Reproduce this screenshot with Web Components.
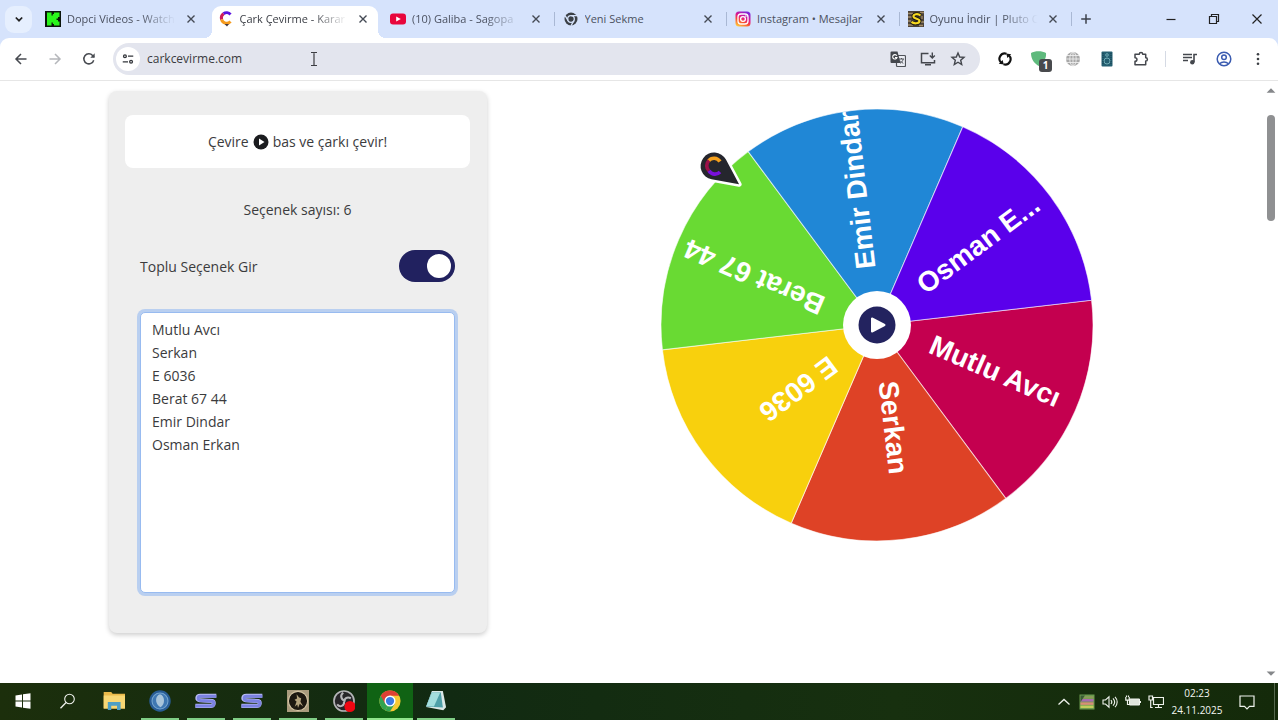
<!DOCTYPE html>
<html lang="tr">
<head>
<meta charset="utf-8">
<title>Çark Çevirme - Karar Çarkı</title>
<style>
  html, body { height: 100%; }
  body {
    margin: 0;
    display: flex;
    flex-direction: column;
    overflow: hidden;
    background: #fff;
    color: #333;
    font-family: "Open Sans", "Noto Sans", sans-serif;
  }
</style>
</head>
<body>
<tab-strip>
  <browser-tab closable fade label="Dopci Videos - Watch"><ui-icon slot="icon" name="kick"></ui-icon></browser-tab>
  <browser-tab active fade label="Çark Çevirme - Karar"><ui-icon slot="icon" name="cark"></ui-icon></browser-tab>
  <browser-tab divider fade label="(10) Galiba - Sagopa"><ui-icon slot="icon" name="youtube"></ui-icon></browser-tab>
  <browser-tab divider label="Yeni Sekme"><ui-icon slot="icon" name="chromeMono"></ui-icon></browser-tab>
  <browser-tab divider label="Instagram • Mesajlar"><ui-icon slot="icon" name="instagram"></ui-icon></browser-tab>
  <browser-tab divider fade label="Oyunu İndir | Pluto O"><ui-icon slot="icon" name="pluto"></ui-icon></browser-tab>
</tab-strip>
<nav-bar></nav-bar>
<page-view>
  <option-panel></option-panel>
  <spin-wheel></spin-wheel>
</page-view>
<task-bar></task-bar>

<script>
const ICONS = {
  kick: '<rect width="16" height="16" fill="#0b140b"/><path d="M2 1.500h4.500v3h1.300V3H9V1.500h5.500v4.500H13v1.500h-1.500v1.500H13V10.500h1.500v4H9V13H7.800v-1.500H6.500v3H2z" fill="#2af51c"/>',
  cark: '<g fill="none" stroke-width="3"><path d="M12.500 3.500A5.200 5.200 0 0 0 5.500 2.800" stroke="#5b12e0"/><path d="M5.500 2.800A5.200 5.200 0 0 0 3.600 8.500" stroke="#d01c58"/><path d="M3.600 8.500A5.200 5.200 0 0 0 12.500 10.500" stroke="#f59a1c"/></g><path d="M6.500 13h4.500l-2 2.500z" fill="#443a40"/>',
  youtube: '<rect y="2.500" width="16" height="11" rx="3" fill="#e8063c"/><path d="M6.200 5.500 10.800 8l-4.600 2.500z" fill="#fff"/>',
  chromeMono: '<circle cx="8" cy="8" r="6.500" fill="#3b4046"/><circle cx="8" cy="8" r="3.300" fill="none" stroke="#d6e3fb" stroke-width="1.300"/><path d="M8 4.700h6M5.100 9.600 2.100 4.600M10.900 9.600 8 14.700" stroke="#d6e3fb" stroke-width="1.300"/>',
  instagram: '<defs><linearGradient id="ig" x1="0.200" y1="1" x2="0.700" y2="0"><stop offset="0" stop-color="#ffc93c"/><stop offset=".35" stop-color="#f9502f"/><stop offset=".6" stop-color="#e0178c"/><stop offset="1" stop-color="#7c28dd"/></linearGradient></defs><rect x=".5" y=".5" width="15" height="15" rx="3.500" fill="url(#ig)"/><g fill="none" stroke="#fff" stroke-width="1.300"><rect x="3" y="3" width="10" height="10" rx="3"/><circle cx="8" cy="8" r="2.400"/></g><circle cx="10.900" cy="5.100" r=".8" fill="#fff"/>',
  pluto: '<rect width="16" height="16" fill="#4a4238"/><path d="M0 2.500h5M0 6h4M0 10h3M0 14h5M12 1.500h4M14 5v3M13 11h3M11 14.500h4" stroke="#a08a68" stroke-width="1.300"/><path d="M12.500 4.500C10 2.200 5 3 5.500 5.800c.4 2.400 6.300 1.600 6 4.300-.3 2.600-5.600 2.900-8 .8" fill="none" stroke="#1d1a12" stroke-width="4"/><path d="M12.500 4.500C10 2.200 5 3 5.500 5.800c.4 2.400 6.300 1.600 6 4.300-.3 2.600-5.600 2.900-8 .8" fill="none" stroke="#f6d820" stroke-width="2.200"/>',
  chevronDown: '<path d="m4.800 6.500 3.200 3.200 3.200-3.200" fill="none" stroke="#222" stroke-width="1.700"/>',
  close: '<path d="m4.500 4.500 7 7m0-7-7 7" stroke="#444a55" stroke-width="1.400"/>',
  plus: '<path d="M8 3.200v9.600M3.200 8h9.600" stroke="#3c414b" stroke-width="1.500"/>',
  minimize: '<path d="M3.500 8.500h9" stroke="#222" stroke-width="1.200"/>',
  restore: '<path d="M3.500 5.500h7v7h-7zM5.500 5.500v-2h7v7h-2" fill="none" stroke="#222" stroke-width="1.200"/>',
  closeWindow: '<path d="m3.500 3.500 9 9m0-9-9 9" stroke="#222" stroke-width="1.200"/>',
  back: '<path d="M13.500 8H3M8 3 3 8l5 5" fill="none" stroke="#474a50" stroke-width="1.500"/>',
  forward: '<path d="M2.500 8H13M8 3l5 5-5 5" fill="none" stroke="#b5b7bb" stroke-width="1.500"/>',
  reload: '<path d="M12.700 9.200A5 5 0 1 1 11.600 4.500L13 6" fill="none" stroke="#474a50" stroke-width="1.500"/><path d="M13.700 2.300v4.400H9.300z" fill="#474a50"/>',
  tune: '<g fill="none" stroke="#33363b" stroke-width="1.500"><circle cx="4.500" cy="4.800" r="1.600"/><path d="M8 4.800h6M2 11.200h6"/><circle cx="11.500" cy="11.200" r="1.600"/></g>',
  translate: '<rect x="6.500" y="4.500" width="9" height="11" rx="1" fill="#eceef4" stroke="#505359" stroke-width="1.200"/><path d="M9 8h5m-2.500-1v1m1.700 0c-.4 2-1.600 3.400-3.200 4.300m.3-2.500c.8 1.200 1.800 2 3 2.500" fill="none" stroke="#505359"/><path d="M1.500.5h6L10.500 12H1.500a1 1 0 0 1-1-1V1.500a1 1 0 0 1 1-1z" fill="#44474d"/><path d="M6.800 4.700A2.200 2.200 0 1 0 7 6.500H5" fill="none" stroke="#fff" stroke-width="1.100"/>',
  install: '<path d="M8.500 2.500h-7v9.200h13V9M5 13.700h6" fill="none" stroke="#44474d" stroke-width="1.500"/><path d="M12.300 1.500v5M9.800 4.500l2.500 2.500 2.500-2.500" fill="none" stroke="#44474d" stroke-width="1.400"/>',
  star: '<path d="m8 2 1.700 4 4.300.4-3.300 2.800 1 4.300L8 11.200l-3.700 2.300 1-4.300L2 6.400 6.300 6z" fill="none" stroke="#44474d" stroke-width="1.400"/>',
  sync: '<path d="M9.500 2.700A5.400 5.400 0 0 0 4.200 11.800M6.500 13.300A5.400 5.400 0 0 0 11.800 4.200" fill="none" stroke="#111" stroke-width="2.100"/><path d="m1.800 12.800 5 .7-1.200-4.600zM14.200 3.200l-5-.7 1.200 4.600z" fill="#111"/>',
  shield: '<path d="M0 2c4-2.500 11-2.500 15 0 .5 6-2.500 9.500-7.500 13C3 12 0 8 0 2z" fill="#5fba7d"/>',
  globe: '<circle cx="8" cy="8" r="7" fill="#a8a8a8"/><g fill="none" stroke="#ededed" stroke-width=".9"><ellipse cx="8" cy="8" rx="3.200" ry="7"/><path d="M8 1v14M1 8h14M2 4.500h12M2 11.500h12"/></g>',
  speaker: '<rect x="2.500" y=".5" width="11" height="15" rx="1" fill="#245e70"/><g fill="none" stroke="#70aab4" stroke-width="1"><circle cx="8" cy="10" r="3"/><circle cx="8" cy="4" r="1.300"/></g><path d="M4 2v12M12 2v12" stroke="#173f4e" stroke-dasharray="1 1"/>',
  puzzle: '<path d="M2 3.200h4.300a1.700 1.700 0 0 1 3.400 0h3v3.500a1.700 1.700 0 0 1 0 3.400v3.700H2v-3.500c2.600 0 2.600-3.600 0-3.600z" fill="none" stroke="#44474d" stroke-width="1.500" stroke-linejoin="round"/>',
  playlist: '<path d="M1 3.500h9M1 6.500h9M1 9.500h5" stroke="#44474d" stroke-width="1.500"/><path d="M12 11V3.500h3" fill="none" stroke="#44474d" stroke-width="1.600"/><circle cx="10.300" cy="11.200" r="2.200" fill="#44474d"/>',
  profile: '<g fill="none" stroke="#3a5bb0" stroke-width="1.500"><circle cx="8" cy="8" r="6.800"/><circle cx="8" cy="6.300" r="2.300"/><path d="M3.500 12.800c2.500-2.300 6.500-2.300 9 0"/></g>',
  more: '<g fill="#3c3f44"><circle cx="8" cy="3.300" r="1.300"/><circle cx="8" cy="8" r="1.300"/><circle cx="8" cy="12.700" r="1.300"/></g>',
  play: '<circle cx="8" cy="8" r="7.500" fill="#1b1c1f"/><path d="M6 4.500 11.500 8 6 11.500z" fill="#fff"/>',
  up: '<path d="M3 11h10L8 6z" fill="#85878a"/>',
  down: '<path d="M3 5h10l-5 5z" fill="#85878a"/>',
  ibeam: '<path d="M5 1.500h2.500L8 2l.5-.5H11M8 2v12M5 14.500h2.500L8 14l.5.500H11" fill="none" stroke="#3c3d42" stroke-width="1.200"/>',
  windows: '<path d="M.5 2.400 7 1.500v6H.5zM8 1.300 15.500.3v7.200H8zM.5 8.500H7v6l-6.500-.9zM8 8.500h7.500v7.200L8 14.700z" fill="#fff"/>',
  search: '<circle cx="9.500" cy="6" r="4.800" fill="none" stroke="#f0f3ee" stroke-width="1.100"/><path d="M6.100 9.500.5 15.200" stroke="#f0f3ee" stroke-width="1.300"/>',
  folder: '<path d="M.5 1.500H6l1 1.300h9V13.500H.5z" fill="#e9b94a"/><path d="M.5 4H16v9.500H.5z" fill="#f7d774"/><path d="M3.500 14.500V8.800h9.300v5.700h-2.600v-3H6v3z" fill="#4d9fc4"/>',
  orb: '<circle cx="8" cy="8" r="7.800" fill="#285c94"/><circle cx="8" cy="8" r="5.800" fill="#3f78b2" stroke="#73a4cf" stroke-width=".8"/><path d="M8 3c-3.700 1-4 7 .3 9.500 3.700-2 3.400-8.500-.3-9.500z" fill="#a9c5da"/>',
  sLogo: '<path d="M15.500 4.200H3.800C1.300 4.200.9 7.300 3.500 7.500l9 .5c1.500.2 1.500 3.300-.5 3.500H.3" fill="none" stroke="#b9bdf5" stroke-width="3"/><path d="M15.500 4.500H4C1.900 4.500 1.700 7.300 4 7.600l8.500.6c1.700.3 1.500 3.300-.5 3.500H.3" fill="none" stroke="#7b82e2" stroke-width="2.200"/>',
  horse: '<rect width="16" height="16" fill="#a99b7d"/><circle cx="8" cy="8" r="7" fill="#1c1810" stroke="#d3c5a3" stroke-width=".8"/><path d="M4.500 13c2-1 1.500-3 2.500-4.500L5.500 7l1.800-.8L7 3l1.800 2.500 1.500.5-.5 2.500 2 3.500-2.500-2L8 13l-.5-2.500z" fill="#b3a37d"/>',
  obs: '<circle cx="8" cy="8" r="7.300" fill="#272629" stroke="#b5b5b8" stroke-width="1.200"/><path d="M7.500 2c-3 2-1 5.500 1 5.500M13 6c-3-1.500-5 .5-4.500 2.500M3 10.500c2 2.500 5.500 1 5-2" fill="none" stroke="#b6b6b9" stroke-width="1.500"/><circle cx="12.300" cy="12" r="4" fill="#f00712"/>',
  chrome: '<circle cx="8" cy="8" r="7.700" fill="#f6c934"/><path d="M8 8 4.600 14.900A7.700 7.700 0 0 1 1.300 4.200z" fill="#32a350"/><path d="M8 8 4.600 14.900A7.700 7.700 0 0 0 8 15.700L11.500 10z" fill="#32a350"/><path d="M1.300 4.200A7.700 7.700 0 0 1 14.700 4.200H8L4.500 10z" fill="#de4034"/><circle cx="8" cy="8" r="4" fill="#fff"/><circle cx="8" cy="8" r="3" fill="#3b7ae2"/>',
  note: '<path d="M5 .8h8l2.300 11.700-2 2.300L.8 12.300z" fill="#dbe9e7"/><path d="M4.800 1.800h6.700l1.500 11L.8 12z" fill="#4fa0a8"/><path d="m5 1.800 6 .2-4.500 10-5.500-.3z" fill="#a3dedd"/>',
  chevronUp: '<path d="m2.500 10.500 5.500-5 5.500 5" fill="none" stroke="#eef2ec" stroke-width="1.300"/>',
  colors: '<rect x=".5" y=".5" width="15" height="15" fill="#6a9a4e"/><path d="M1.500 3.300h13" stroke="#8a9c58" stroke-width="2.500"/><path d="M1.500 6.300h13" stroke="#a86ab0" stroke-width="2.600"/><path d="M1.500 9.600h13" stroke="#d78f76" stroke-width="2.500"/><path d="M1.500 12.800h13" stroke="#c3cc5c" stroke-width="2.500"/><path d="M1.500 1.500 6 1.500 1.500 8z" fill="#385b34"/>',
  volume: '<path d="M1 6h2.500L7 2.800v10.400L3.500 10H1zM9 6c1 1.200 1 2.800 0 4M11 4.300c2 2.200 2 5.200 0 7.400M13 2.800c2.900 3 2.900 7.400 0 10.400" fill="none" stroke="#eef2ec" stroke-width="1.100"/>',
  battery: '<path d="M4.500 5h10v6h-10z" fill="#dfe5dc" stroke="#eef2ec"/><path d="M.8 3v3.200h3.400V3M1.500 3V1.500M3.500 3V1.500M2.500 6v4.500h2M15.500 7v2" fill="none" stroke="#eef2ec" stroke-width="1.200"/>',
  network: '<path d="M5.500 3.500h10v7h-10zM10.500 10.500v3M7 13.500h7M1 2h3.500v4H1zM2.700 6v7.500h2" fill="none" stroke="#eef2ec" stroke-width="1.200"/>',
  notify: '<path d="M1 2h14v10.300h-4.500L8 14.800 5.500 12.300H1z" fill="none" stroke="#eef2ec" stroke-width="1.200"/>'
};

/* Shared base: every element renders its own template into an open root. */
class Base extends HTMLElement {
  connectedCallback() {
    if (this.shadowRoot) return;
    const t = document.createElement('template');
    t.innerHTML = this.view();
    this.attachShadow({ mode: 'open' }).append(t.content.cloneNode(true));
  }
}

class UiIcon extends Base {
  view() {
    return `<style>:host{display:block;flex:none;width:var(--icon,16px);height:var(--icon,16px)}svg{display:block;width:100%;height:100%}</style>
    <svg viewBox="0 0 16 16" aria-hidden="true">${ICONS[this.getAttribute('name')]}</svg>`;
  }
}

class IconButton extends Base {
  view() {
    return `<style>
      :host{display:flex;flex:none;width:34px;height:32px}
      button{all:unset;display:flex;align-items:center;justify-content:center;width:100%;height:100%}
    </style><button aria-label="${this.getAttribute('label')}"><ui-icon name="${this.getAttribute('name')}"></ui-icon></button>`;
  }
}

class BrowserTab extends Base {
  view() {
    return `<style>
      :host{display:flex;flex:1 1 0;min-width:0;position:relative;isolation:isolate;align-items:center;height:38px;padding-left:8px;box-sizing:border-box;color:#4b5160}
      :host([active]){color:#3a3d44}
      :host([active])::before{content:"";position:absolute;z-index:-1;inset:6px 4px 0 2px;background:#fff;border-radius:9px 9px 0 0}
      .flare{display:none}
      :host([active]) .flare{display:block;position:absolute;z-index:-1;bottom:0;width:8px;height:8px}
      .l{left:-6px;background:radial-gradient(circle at 0 0,transparent 8px,#fff 8px)}
      .r{right:-4px;background:radial-gradient(circle at 100% 0,transparent 8px,#fff 8px)}
      .title{all:unset;flex:1;min-width:0;margin:0 4px 0 6px;overflow:hidden;white-space:nowrap;font-size:11px;line-height:20px}
      :host([fade]) .title{-webkit-mask-image:linear-gradient(90deg,#000 65%,transparent 97%);mask-image:linear-gradient(90deg,#000 65%,transparent 97%)}
      .close{width:16px;height:16px;margin-right:10px}
      .bar{width:1px;height:14px;background:transparent}
      :host([divider]) .bar{background:#a9b8d4}
    </style>
    <span class="flare l"></span><span class="flare r"></span>
    <slot name="icon"></slot>
    <button class="title" role="tab">${this.getAttribute('label')}</button>
    <icon-button class="close" name="close" label="Sekmeyi kapat"></icon-button>
    <span class="bar"></span>`;
  }
}

class TabStrip extends Base {
  view() {
    return `<style>
      :host{display:flex;flex:none;align-items:center;height:38px;background:#d6e3fc;padding-left:5px}
      .find{width:27px;height:27px;border-radius:9px;background:#e6effe;margin-right:5px}
      .tabs{display:flex;flex:1;min-width:0}
      .new{width:28px;margin-right:49px}
      .win{width:43px;height:38px}
    </style>
    <icon-button class="find" name="chevronDown" label="Sekmelerde ara"></icon-button>
    <div class="tabs" role="tablist"><slot></slot></div>
    <icon-button class="new" name="plus" label="Yeni sekme"></icon-button>
    <icon-button class="win" name="minimize" label="Simge durumuna küçült"></icon-button>
    <icon-button class="win" name="restore" label="Geri yükle"></icon-button>
    <icon-button class="win" name="closeWindow" label="Kapat"></icon-button>`;
  }
}

class NavBar extends Base {
  view() {
    return `<style>
      :host{display:block;flex:none;position:relative;background:#d6e3fc}
      .row{display:flex;align-items:center;height:42px;padding:0 3px 0 4px;background:#fff;border-radius:9px 9px 0 0;border-bottom:1px solid #e6e6e6}
      .pill{display:flex;flex:1;align-items:center;min-width:0;height:32px;margin:0 8px 0 7px;padding:0 7px 0 3px;border-radius:16px;background:#e3e5ee;box-sizing:border-box}
      .site{width:24px;height:24px;border-radius:12px;background:#fff;--icon:14px}
      input{flex:1;min-width:0;margin:0;padding:0 0 0 7px;border:0;background:none;outline:0;color:#3a3b40;font:12px/20px "Open Sans","Noto Sans",sans-serif}
      .in{width:30px}
      .ext{position:relative}
      .badge{position:absolute;right:4px;bottom:3px;width:13px;height:13px;border-radius:3px;background:#484a4d;color:#fff;font:bold 10px/13px "Open Sans",sans-serif;text-align:center}
      .bar{width:1px;height:16px;margin:0 7px;background:#d5dae4}
      .caret{position:absolute;left:306px;top:13px}
    </style>
    <div class="row">
      <icon-button name="back" label="Geri"></icon-button>
      <icon-button name="forward" label="İleri"></icon-button>
      <icon-button name="reload" label="Yenile"></icon-button>
      <div class="pill">
        <icon-button class="site" name="tune" label="Site bilgileri"></icon-button>
        <input type="text" value="carkcevirme.com" aria-label="Adres" spellcheck="false">
        <icon-button class="in" name="translate" label="Çevir"></icon-button>
        <icon-button class="in" name="install" label="Yükle"></icon-button>
        <icon-button class="in" name="star" label="Yer işareti"></icon-button>
      </div>
      <icon-button name="sync" label="Eşitleme"></icon-button>
      <div class="ext"><icon-button name="shield" label="Koruma"></icon-button><span class="badge">1</span></div>
      <icon-button name="globe" label="Ağ"></icon-button>
      <icon-button name="speaker" label="Ses"></icon-button>
      <icon-button name="puzzle" label="Uzantılar"></icon-button>
      <span class="bar"></span>
      <icon-button name="playlist" label="Medya"></icon-button>
      <icon-button name="profile" label="Profil"></icon-button>
      <icon-button name="more" label="Menü"></icon-button>
    </div>
    <ui-icon class="caret" name="ibeam"></ui-icon>`;
  }
}

class PageView extends Base {
  view() {
    return `<style>
      :host{display:flex;flex:1;min-height:0;background:#fff}
      main{flex:1;min-width:0;display:grid;grid-template-columns:minmax(0,378px) minmax(0,1fr);align-items:start;padding:10px 0 0 109px;overflow:hidden}
      .bar{display:flex;flex-direction:column;align-items:center;width:14px;--icon:14px}
      .track{flex:1;width:8px;padding-top:16px;box-sizing:border-box}
      .thumb{height:106px;border-radius:4px;background:#8f9092}
      .edge{padding:2px 0}
    </style>
    <main><slot></slot></main>
    <div class="bar" aria-hidden="true">
      <ui-icon class="edge" name="up"></ui-icon>
      <div class="track"><div class="thumb"></div></div>
      <ui-icon class="edge" name="down"></ui-icon>
    </div>`;
  }
}

class ToggleSwitch extends Base {
  view() {
    return `<style>
      :host{display:block}
      label{display:flex;align-items:center;justify-content:space-between}
      input{appearance:none;margin:0;width:56px;height:32px;padding:4px;border-radius:16px;background:#21215f;display:flex;justify-content:flex-end;box-sizing:border-box}
      input::before{content:"";width:24px;height:24px;border-radius:50%;background:#fff}
    </style>
    <label>${this.getAttribute('label')}<input type="checkbox" role="switch" checked></label>`;
  }
}

class OptionPanel extends Base {
  view() {
    return `<style>
      :host{display:flex;flex-direction:column;box-sizing:border-box;padding:24px 17px 40px 16px;border-radius:8px;background:#eee;box-shadow:0 2px 5px rgba(0,0,0,.2);font-size:14px;line-height:23px;color:#3b3b3d}
      .hint{display:flex;align-items:center;justify-content:center;gap:4px;height:53px;margin:0;border-radius:8px;background:#fff}
      .count{margin:30px 0 29px;text-align:center}
      .group{display:flex;flex-direction:column;gap:30px;padding:0 15px}
      textarea{display:block;width:100%;height:281px;box-sizing:border-box;margin:0;padding:5px 11px;border:1px solid #98bbf0;border-radius:5px;outline:0;box-shadow:0 0 0 3px #b9cff0;background:#fff;color:inherit;font:14px/23px "Open Sans","Noto Sans",sans-serif;resize:none}
    </style>
    <p class="hint">Çevire <ui-icon name="play"></ui-icon> bas ve çarkı çevir!</p>
    <p class="count">Seçenek sayısı: 6</p>
    <div class="group">
      <toggle-switch label="Toplu Seçenek Gir"></toggle-switch>
      <textarea aria-label="Seçenekler" spellcheck="false">Mutlu Avcı
Serkan
E 6036
Berat 67 44
Emir Dindar
Osman Erkan</textarea>
    </div>`;
  }
}

class SpinWheel extends Base {
  view() {
    const R = 216, start = -6.6;
    const items = [['Mutlu Avcı', '#c4004f'], ['Serkan', '#de4226'], ['E 6036', '#f8d00d'], ['Berat 67 44', '#69da33'], ['Emir Dindar', '#2087d6'], ['Osman E...', '#5a00eb']];
    const x = (R * Math.cos(Math.PI / 3)).toFixed(2), y = (R * Math.sin(Math.PI / 3)).toFixed(2);
    const slices = items.map(([, c], i) =>
      `<path transform="rotate(${start + 60 * i})" d="M0 0H${R}A${R} ${R} 0 0 1 ${x} ${y}Z" fill="${c}" stroke="#fff" stroke-opacity=".6"/>`).join('');
    const names = items.map(([n], i) =>
      `<text transform="rotate(${start + 30 + 60 * i})" x="57" y="5">${n}</text>`).join('');
    return `<style>
      :host{display:grid;justify-items:center;align-items:center;padding:18px 0 0 3px}
      svg.wheel{grid-area:1/1;display:block;width:432px;max-width:100%;overflow:visible}
      text{fill:#fff;font:bold 28px "Liberation Sans",Arial,sans-serif}
      button{all:unset;grid-area:1/1;display:flex;align-items:center;justify-content:center;width:68px;height:68px;border-radius:50%;background:#fff}
      button svg{width:38px;height:38px}
    </style>
    <svg class="wheel" viewBox="-216 -216 432 432">
      ${slices}${names}
      <g transform="translate(-163 -159)">
        <path transform="rotate(36)" d="M31 0 5.900 12.200A13.500 13.500 0 1 1 5.900-12.200Z" fill="#25262d" stroke="#fff" stroke-width="5" stroke-linejoin="round" paint-order="stroke"/>
        <g fill="none" stroke-width="3.600">
          <path d="M6-4.500A7 7 0 0 0-5.500-5" stroke="#f5a01c"/>
          <path d="M-5-5.500A7 7 0 0 0-5 4.800" stroke="#9c1048"/>
          <path d="M-5 4.800A7 7 0 0 0 6 6" stroke="#7a10dc"/>
        </g>
      </g>
    </svg>
    <button aria-label="Çevir"><svg viewBox="-19 -19 38 38" aria-hidden="true"><circle r="18.500" fill="#23235f"/><path d="M-5-6.500v13L7.500 0z" fill="#fff" stroke="#fff" stroke-width="2" stroke-linejoin="round"/></svg></button>`;
  }
}

class TaskItem extends Base {
  view() {
    return `<style>
      :host{display:flex;flex:none;flex-direction:column;align-items:center;width:46px;height:37px;--icon:22px}
      :host([small]){--icon:16px}
      :host([current]){background:#106314}
      button{all:unset;flex:1;display:flex;align-items:center}
      i{width:38px;height:2px;background:transparent}
      :host([running]) i{background:#80ce86}
      :host([current]) i{width:46px;background:#8fe68c}
    </style>
    <button aria-label="${this.getAttribute('label')}"><ui-icon name="${this.getAttribute('name')}"></ui-icon></button><i></i>`;
  }
}

class TaskBar extends Base {
  view() {
    return `<style>
      :host{display:flex;flex:none;justify-content:space-between;height:37px;background:linear-gradient(90deg,#1c2f0c,#112a12 35%,#17300f 70%,#142a0a)}
      nav,.tray{display:flex;align-items:center}
      .start{width:45px}
      .tray icon-button{width:23px;height:37px}
      time{display:block;width:60px;color:#f3f6f1;font-size:10px;line-height:17px;text-align:center}
      .tray .notify{width:40px;margin-right:7px}
      .desk{width:4px;height:37px;border-left:1px solid #55684e;box-sizing:border-box}
    </style>
    <nav aria-label="Görev çubuğu">
      <task-item class="start" small name="windows" label="Başlat"></task-item>
      <task-item small name="search" label="Ara"></task-item>
      <task-item name="folder" label="Dosya Gezgini"></task-item>
      <task-item running name="orb" label="Uygulama"></task-item>
      <task-item running name="sLogo" label="Sunucu"></task-item>
      <task-item running name="sLogo" label="Sunucu 2"></task-item>
      <task-item running name="horse" label="Oyun"></task-item>
      <task-item running name="obs" label="OBS"></task-item>
      <task-item running current name="chrome" label="Chrome"></task-item>
      <task-item running name="note" label="Not Defteri"></task-item>
    </nav>
    <div class="tray">
      <icon-button name="chevronUp" label="Gizli simgeler"></icon-button>
      <icon-button name="colors" label="Ekran"></icon-button>
      <icon-button name="volume" label="Ses"></icon-button>
      <icon-button name="battery" label="Pil"></icon-button>
      <icon-button name="network" label="Ağ"></icon-button>
      <time datetime="2025-11-24T02:23">02:23<br>24.11.2025</time>
      <icon-button class="notify" name="notify" label="Bildirimler"></icon-button>
      <span class="desk"></span>
    </div>`;
  }
}

customElements.define('ui-icon', UiIcon);
customElements.define('icon-button', IconButton);
customElements.define('browser-tab', BrowserTab);
customElements.define('tab-strip', TabStrip);
customElements.define('nav-bar', NavBar);
customElements.define('page-view', PageView);
customElements.define('toggle-switch', ToggleSwitch);
customElements.define('option-panel', OptionPanel);
customElements.define('spin-wheel', SpinWheel);
customElements.define('task-item', TaskItem);
customElements.define('task-bar', TaskBar);
</script>
</body>
</html>
